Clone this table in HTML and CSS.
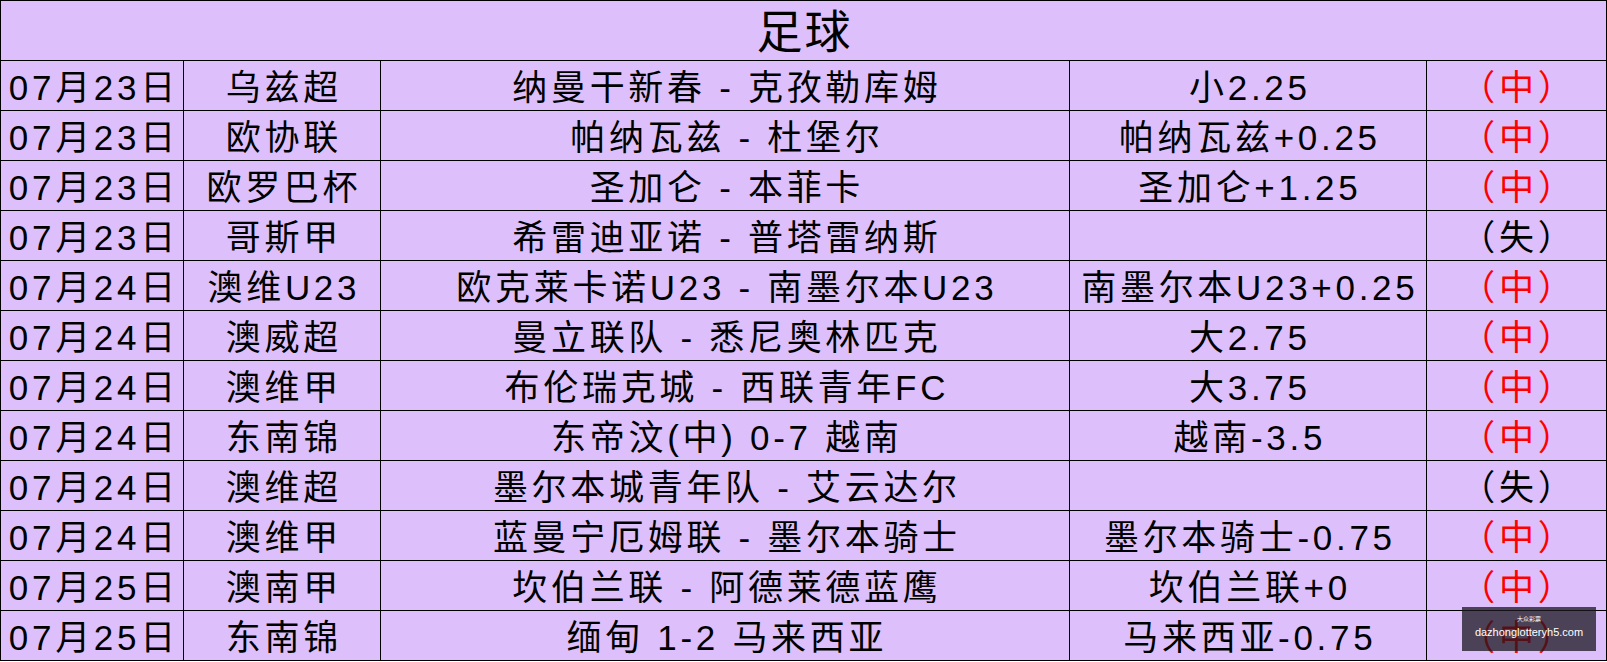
FILE: index.html
```html
<!DOCTYPE html>
<html lang="zh-CN">
<head>
<meta charset="utf-8">
<title>足球</title>
<link rel="stylesheet" href="styles.css">
</head>
<body>
<div class="sheet">
  <div class="board">
    <div class="cell title">足球</div>

    <div class="cell">07月23日</div><div class="cell">乌兹超</div><div class="cell">纳曼干新春 - 克孜勒库姆</div><div class="cell">小2.25</div><div class="cell hit">（中）</div>
    <div class="cell">07月23日</div><div class="cell">欧协联</div><div class="cell">帕纳瓦兹 - 杜堡尔</div><div class="cell">帕纳瓦兹+0.25</div><div class="cell hit">（中）</div>
    <div class="cell">07月23日</div><div class="cell">欧罗巴杯</div><div class="cell">圣加仑 - 本菲卡</div><div class="cell">圣加仑+1.25</div><div class="cell hit">（中）</div>
    <div class="cell">07月23日</div><div class="cell">哥斯甲</div><div class="cell">希雷迪亚诺 - 普塔雷纳斯</div><div class="cell"></div><div class="cell">（失）</div>
    <div class="cell">07月24日</div><div class="cell">澳维U23</div><div class="cell">欧克莱卡诺U23 - 南墨尔本U23</div><div class="cell">南墨尔本U23+0.25</div><div class="cell hit">（中）</div>
    <div class="cell">07月24日</div><div class="cell">澳威超</div><div class="cell">曼立联队 - 悉尼奥林匹克</div><div class="cell">大2.75</div><div class="cell hit">（中）</div>
    <div class="cell">07月24日</div><div class="cell">澳维甲</div><div class="cell">布伦瑞克城 - 西联青年FC</div><div class="cell">大3.75</div><div class="cell hit">（中）</div>
    <div class="cell">07月24日</div><div class="cell">东南锦</div><div class="cell">东帝汶(中) 0-7 越南</div><div class="cell">越南-3.5</div><div class="cell hit">（中）</div>
    <div class="cell">07月24日</div><div class="cell">澳维超</div><div class="cell">墨尔本城青年队 - 艾云达尔</div><div class="cell"></div><div class="cell">（失）</div>
    <div class="cell">07月24日</div><div class="cell">澳维甲</div><div class="cell">蓝曼宁厄姆联 - 墨尔本骑士</div><div class="cell">墨尔本骑士-0.75</div><div class="cell hit">（中）</div>
    <div class="cell">07月25日</div><div class="cell">澳南甲</div><div class="cell">坎伯兰联 - 阿德莱德蓝鹰</div><div class="cell">坎伯兰联+0</div><div class="cell hit">（中）</div>
    <div class="cell">07月25日</div><div class="cell">东南锦</div><div class="cell">缅甸 1-2 马来西亚</div><div class="cell">马来西亚-0.75</div><div class="cell hit">（中）</div>
  </div>
  <div class="watermark">
    <span class="wm-small">大众彩票</span>
    <span class="wm-url">dazhonglotteryh5.com</span>
  </div>
</div>
</body>
</html>
```

FILE: styles.css
```css
html, body {
  margin: 0;
  padding: 0;
  background: #ffffff;
}

.sheet {
  position: relative;
  width: 1607px;
  height: 662px;
}

.board {
  display: grid;
  grid-template-columns: 183px 197px 689px 357px 180px;
  grid-template-rows: 60px repeat(12, 50px);
  border-top: 1px solid #000;
  border-left: 1px solid #000;
  background: #ddc0fb;
  font-family: "Liberation Sans", "Noto Sans CJK SC", sans-serif;
  font-size: 35px;
  letter-spacing: 3.7px;
  color: #000;
  width: 1606px;
}

.cell {
  border-right: 1px solid #000;
  border-bottom: 1px solid #000;
  display: flex;
  align-items: center;
  justify-content: center;
  white-space: nowrap;
  line-height: 1;
  padding-top: 4px;
  padding-left: 3.7px;
  box-sizing: border-box;
}

.title {
  grid-column: 1 / -1;
  font-size: 46px;
  letter-spacing: 2px;
  padding-left: 2px;
  padding-top: 2px;
}

.hit {
  color: #ff0000;
}

.watermark {
  position: absolute;
  left: 1462px;
  top: 607px;
  width: 134px;
  height: 44px;
  box-sizing: border-box;
  padding-top: 9px;
  background: rgba(27, 24, 32, 0.75);
  color: #ffffff;
  display: flex;
  flex-direction: column;
  align-items: center;
  gap: 3px;
  font-family: "Liberation Sans", "Noto Sans CJK SC", sans-serif;
}

.wm-small {
  font-size: 6px;
  line-height: 7px;
}

.wm-url {
  font-size: 11px;
  line-height: 13px;
}
```
